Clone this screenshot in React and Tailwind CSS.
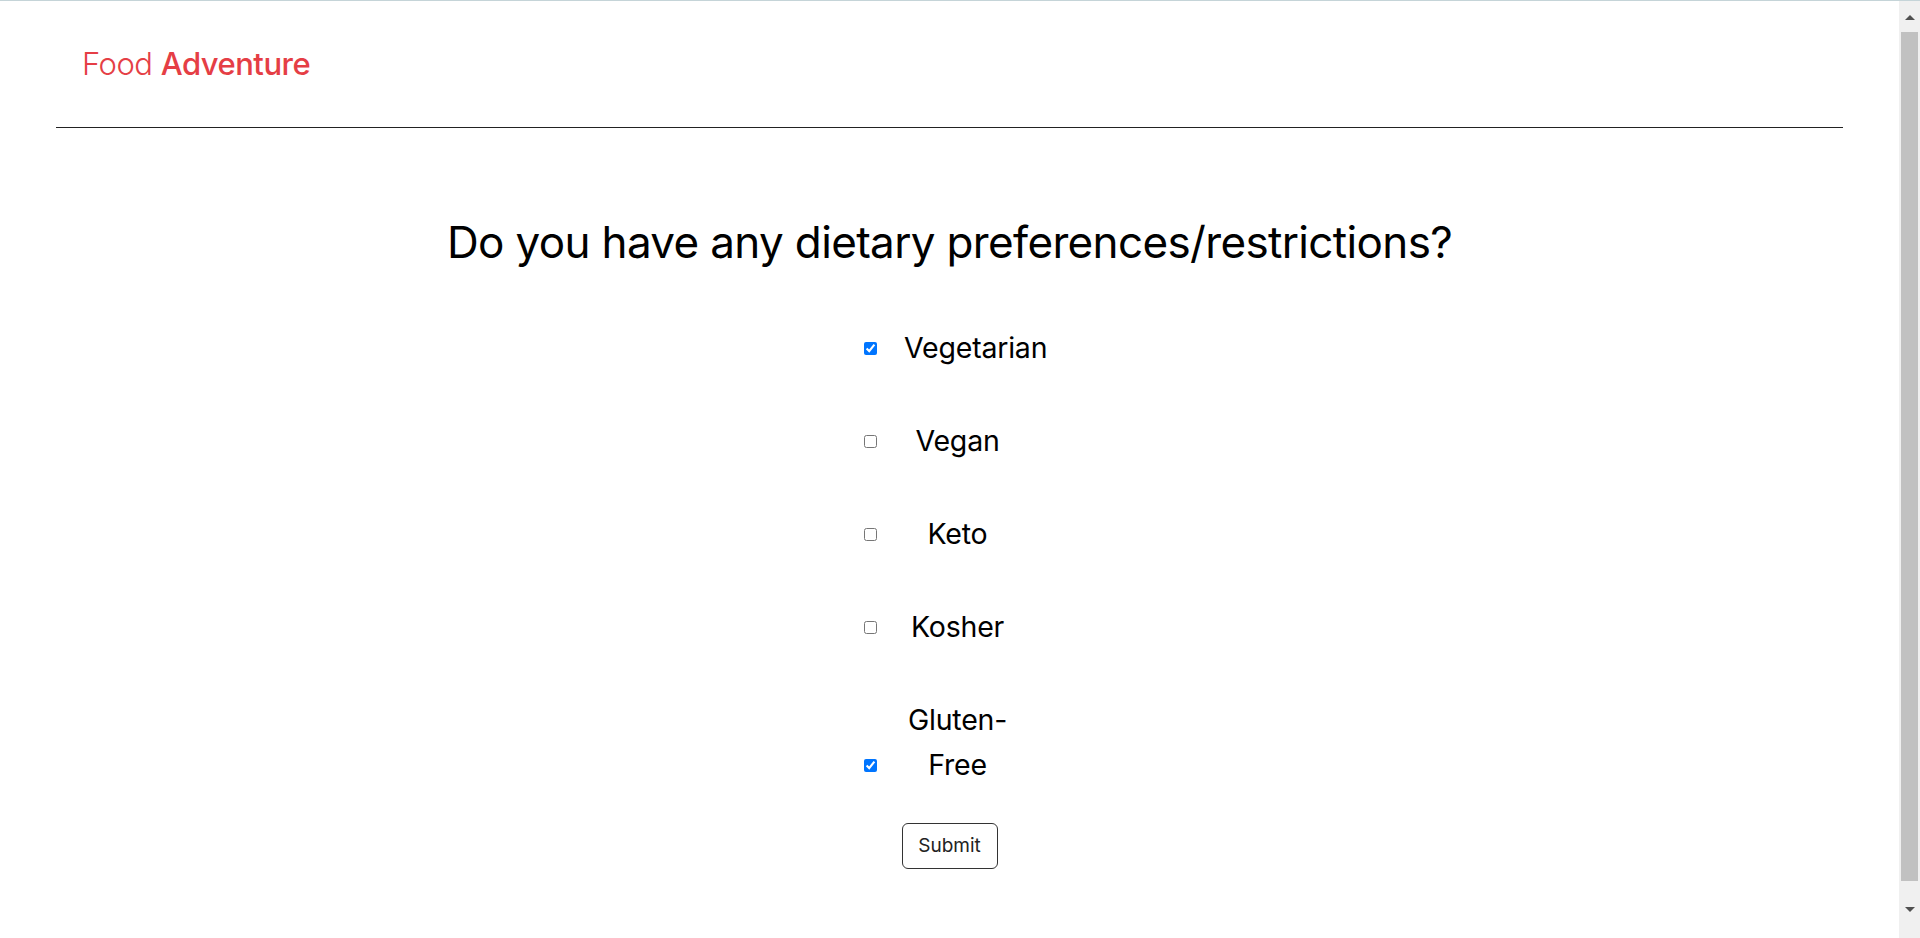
import React from 'react';

const options = [
  { label: 'Vegetarian', checked: true },
  { label: 'Vegan', checked: false },
  { label: 'Keto', checked: false },
  { label: 'Kosher', checked: false },
  { label: 'Gluten-Free', checked: true },
];

const Scrollbar = () => (
  <div className="w-[21px] h-full bg-[#f0f0f0] flex flex-col items-center shrink-0">
    <div className="h-[31px] w-full flex items-center justify-center">
      <svg width="10" height="6" viewBox="0 0 10 6"><path d="M0 6 L5 1 L10 6 Z" fill="#505050" /></svg>
    </div>
    <div className="w-[17px] h-[849px] bg-[#c1c1c1]" />
    <div className="flex-1 w-full flex items-center justify-center">
      <svg width="10" height="6" viewBox="0 0 10 6"><path d="M0 0 L10 0 L5 5 Z" fill="#505050" /></svg>
    </div>
  </div>
);

export default function App() {
  return (
    <div className="h-screen flex flex-col bg-white overflow-hidden" style={{ fontFamily: 'Inter, "Noto Sans", sans-serif' }}>
      <div className="h-px bg-[#c5d4d8] shrink-0" />
      <div className="flex flex-1 min-h-0">
        <div className="flex-1 flex flex-col">
          <header className="h-[126px] flex items-center pl-[82px]">
            <span className="text-[31px] text-[#e53e45] tracking-[-0.5px]">
              <span className="font-light">Food </span>
              <span className="font-medium">Adventure</span>
            </span>
          </header>
          <div className="mx-[56px] border-t border-[#222]" />
          <main className="flex flex-col items-center">
            <h1 className="mt-[85px] text-[44px] leading-[58px] text-black tracking-[-0.65px]">
              Do you have any dietary preferences/restrictions?
            </h1>
            <form className="mt-[54px] flex flex-col items-center" onSubmit={(e) => e.preventDefault()}>
              <div className="flex flex-col gap-[48px]">
                {options.map((o) => (
                  <label key={o.label} className="w-[173px] flex items-end">
                    <input
                      type="checkbox"
                      defaultChecked={o.checked}
                      className="w-[13px] h-[13px] m-0 mb-[15px] ml-[1px] shrink-0"
                    />
                    <span className="ml-[27px] w-[107px] text-center text-[28.5px] leading-[45px] text-black tracking-[-0.2px]">
                      {o.label}
                    </span>
                  </label>
                ))}
              </div>
              <button
                type="submit"
                className="mt-[36px] w-[96px] h-[46px] border border-[#333] rounded-[6px] text-[19px] text-[#222] bg-white"
              >
                Submit
              </button>
            </form>
          </main>
        </div>
        <Scrollbar />
      </div>
    </div>
  );
}
